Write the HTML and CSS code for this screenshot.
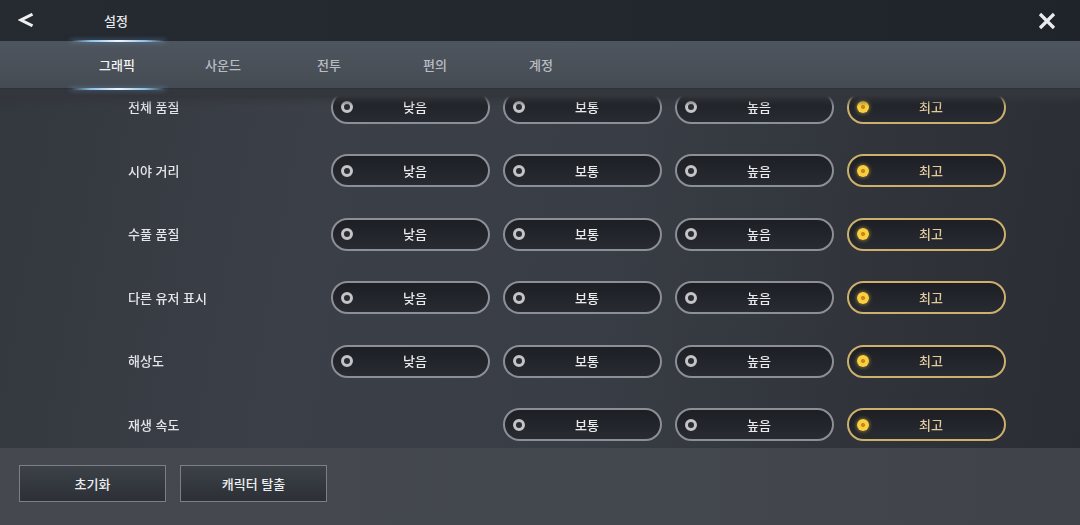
FILE: index.html
```html
<!DOCTYPE html>
<html lang="ko">
<head>
<meta charset="utf-8">
<title>설정</title>
<link rel="stylesheet" href="styles.css">
</head>
<body>
<div class="screen">
  <header class="topbar">
    <button class="icon-btn back" aria-label="뒤로">
      <svg width="16" height="14" viewBox="0 0 16 14"><path d="M14.5 1.2 L3 7 L14.5 12.8" fill="none" stroke="#eef0f2" stroke-width="3" stroke-linejoin="miter"/></svg>
    </button>
    <div class="title">설정</div>
    <button class="icon-btn close" aria-label="닫기">
      <svg width="18" height="18" viewBox="0 0 18 18"><path d="M2 2 L16 16 M16 2 L2 16" stroke="#e9ebee" stroke-width="3.2" stroke-linecap="butt"/></svg>
    </button>
  </header>

  <nav class="tabs">
    <div class="tab active">그래픽</div>
    <div class="tab">사운드</div>
    <div class="tab">전투</div>
    <div class="tab">편의</div>
    <div class="tab">계정</div>
  </nav>

  <main class="content">
    <div class="list">
      <div class="row">
        <div class="label">전체 품질</div>
        <div class="opt"><span class="dot"></span><span class="txt">낮음</span></div>
        <div class="opt"><span class="dot"></span><span class="txt">보통</span></div>
        <div class="opt"><span class="dot"></span><span class="txt">높음</span></div>
        <div class="opt sel"><span class="dot"></span><span class="txt">최고</span></div>
      </div>
      <div class="row">
        <div class="label">시야 거리</div>
        <div class="opt"><span class="dot"></span><span class="txt">낮음</span></div>
        <div class="opt"><span class="dot"></span><span class="txt">보통</span></div>
        <div class="opt"><span class="dot"></span><span class="txt">높음</span></div>
        <div class="opt sel"><span class="dot"></span><span class="txt">최고</span></div>
      </div>
      <div class="row">
        <div class="label">수풀 품질</div>
        <div class="opt"><span class="dot"></span><span class="txt">낮음</span></div>
        <div class="opt"><span class="dot"></span><span class="txt">보통</span></div>
        <div class="opt"><span class="dot"></span><span class="txt">높음</span></div>
        <div class="opt sel"><span class="dot"></span><span class="txt">최고</span></div>
      </div>
      <div class="row">
        <div class="label">다른 유저 표시</div>
        <div class="opt"><span class="dot"></span><span class="txt">낮음</span></div>
        <div class="opt"><span class="dot"></span><span class="txt">보통</span></div>
        <div class="opt"><span class="dot"></span><span class="txt">높음</span></div>
        <div class="opt sel"><span class="dot"></span><span class="txt">최고</span></div>
      </div>
      <div class="row">
        <div class="label">해상도</div>
        <div class="opt"><span class="dot"></span><span class="txt">낮음</span></div>
        <div class="opt"><span class="dot"></span><span class="txt">보통</span></div>
        <div class="opt"><span class="dot"></span><span class="txt">높음</span></div>
        <div class="opt sel"><span class="dot"></span><span class="txt">최고</span></div>
      </div>
      <div class="row">
        <div class="label">재생 속도</div>
        <div class="empty"></div>
        <div class="opt"><span class="dot"></span><span class="txt">보통</span></div>
        <div class="opt"><span class="dot"></span><span class="txt">높음</span></div>
        <div class="opt sel"><span class="dot"></span><span class="txt">최고</span></div>
      </div>
    </div>
  </main>

  <footer class="footer">
    <button class="foot-btn">초기화</button>
    <button class="foot-btn">캐릭터 탈출</button>
  </footer>
</div>
</body>
</html>
```

FILE: styles.css
```css
* { box-sizing: border-box; }

html, body {
  margin: 0;
  padding: 0;
  width: 1080px;
  height: 525px;
  overflow: hidden;
  background: #33363c;
  font-family: "Noto Sans CJK KR", "Noto Sans", sans-serif;
}

.screen {
  width: 1080px;
  height: 525px;
  display: flex;
  flex-direction: column;
}

.topbar {
  height: 41px;
  flex: none;
  display: flex;
  align-items: center;
  background: linear-gradient(90deg, #262a31 0%, #23272e 50%, #1f232a 100%);
  position: relative;
}

.icon-btn {
  background: none;
  border: 0;
  padding: 0;
  display: flex;
  align-items: center;
  justify-content: center;
}

.back {
  width: 18px;
  height: 18px;
  margin-left: 17px;
  margin-top: -1px;
}

.title {
  margin-left: 69px;
  color: #e6e8eb;
  font-size: 13px;
  font-weight: 500;
  margin-top: -1px;
}

.close {
  margin-left: auto;
  margin-right: 23px;
  width: 20px;
  height: 20px;
  margin-top: 1px;
}

.tabs {
  height: 48px;
  flex: none;
  display: flex;
  padding-left: 64px;
  background: linear-gradient(180deg, #4e555e 0%, #4a5058 60%, #454b53 100%);
  border-bottom: 1px solid #2e3238;
}

.tab {
  width: 106px;
  display: flex;
  align-items: center;
  justify-content: center;
  color: #b9bdc3;
  font-size: 13px;
  font-weight: 500;
  position: relative;
  padding-bottom: 1px;
}

.tab.active {
  color: #f2f3f5;
}

.tab.active::before,
.tab.active::after {
  content: "";
  position: absolute;
  left: 6px;
  width: 96px;
  height: 2px;
  border-radius: 2px;
  background: linear-gradient(90deg, rgba(120,190,255,0) 0%, rgba(160,215,255,0.85) 22%, #eef8ff 50%, rgba(160,215,255,0.85) 78%, rgba(120,190,255,0) 100%);
  box-shadow: 0 0 5px rgba(120, 190, 255, 0.5);
}

.tab.active::before { top: -1px; }
.tab.active::after { bottom: -2px; }

.content {
  flex: 1;
  overflow: hidden;
  background:
    linear-gradient(100deg, #33373e 0%, #3b4048 28%, #393d45 55%, #30343a 80%, #2a2d33 100%);
  -webkit-mask-image: linear-gradient(180deg, rgba(0,0,0,0) 0px, rgba(0,0,0,0) 7px, rgba(0,0,0,0.5) 11px, #000 17px);
  mask-image: linear-gradient(180deg, rgba(0,0,0,0) 0px, rgba(0,0,0,0) 7px, rgba(0,0,0,0.5) 11px, #000 17px);
}

.list {
  margin-top: -13.5px;
}

.row {
  height: 63.5px;
  display: grid;
  grid-template-columns: 190px repeat(4, 159px);
  column-gap: 13px;
  align-items: center;
  padding-left: 128px;
}

.label {
  color: #e3e5e8;
  font-size: 13px;
  font-weight: 500;
  margin-top: -1px;
}

.opt {
  height: 33px;
  border-radius: 17px;
  border: 2px solid #8c8f95;
  background: linear-gradient(180deg, #1d1f25 0%, #23262c 60%, #282b31 100%);
  display: flex;
  align-items: center;
  position: relative;
  padding-left: 8px;
}

.opt .dot {
  width: 12px;
  height: 12px;
  border-radius: 50%;
  border: 3px solid #c2c4c7;
  background: #2a2c31;
  flex: none;
}

.opt .txt {
  flex: 1;
  text-align: center;
  color: #e9eaec;
  font-size: 13px;
  font-weight: 500;
  margin-right: 11px;
  margin-top: -1px;
}

.opt.sel {
  border-color: #cdb06c;
}

.opt.sel .dot {
  width: 12px;
  height: 12px;
  border: 0;
  background: radial-gradient(circle, #c9861a 0 1.6px, #f7cd3c 2.4px, #fbd649 100%);
  box-shadow: 0 0 4px rgba(255, 200, 60, 0.7);
}

.opt.sel .txt {
  color: #e2c99a;
}

.footer {
  height: 77px;
  flex: none;
  display: flex;
  gap: 14px;
  padding: 17px 0 0 19px;
  background: linear-gradient(90deg, #45494f 0%, #43474e 60%, #404349 100%);
}

.foot-btn {
  width: 147px;
  height: 37px;
  border: 1px solid #7c8086;
  background: linear-gradient(180deg, #3d4249 0%, #33373e 55%, #2d3036 100%);
  color: #eceef0;
  font-family: "Noto Sans CJK KR", "Noto Sans", sans-serif;
  font-size: 13px;
  font-weight: 500;
  padding: 0;
}
```
